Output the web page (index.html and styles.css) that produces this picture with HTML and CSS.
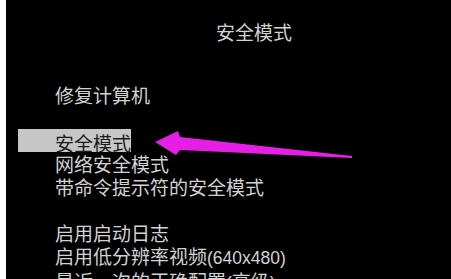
FILE: index.html
```html
<!DOCTYPE html>
<html lang="zh-CN">
<head>
<meta charset="utf-8">
<title>安全模式</title>
<link rel="stylesheet" href="styles.css">
</head>
<body>
<div class="screen">
  <div class="title">安全模式</div>
  <div class="repair">修复计算机</div>
  <ul class="menu">
    <li class="row selected"><span class="bar">安全模式</span></li>
    <li class="row">网络安全模式</li>
    <li class="row">带命令提示符的安全模式</li>
    <li class="row gap"></li>
    <li class="row">启用启动日志</li>
    <li class="row">启用低分辨率视频<span class="latin">(640x480)</span></li>
    <li class="row last">最近一次的正确配置<span class="latin">(</span>高级<span class="latin">)</span></li>
  </ul>
  <svg class="arrow" viewBox="0 0 451 279" width="451" height="279" aria-hidden="true">
    <polygon points="155,142 178,131 180,137 352,156 352,158 180,150 176,155" fill="#e61fe6"/>
  </svg>
</div>
</body>
</html>
```

FILE: styles.css
```css
html, body {
  margin: 0;
  padding: 0;
  background: #000;
  overflow: hidden;
}

.screen {
  position: relative;
  box-sizing: border-box;
  width: 451px;
  height: 279px;
  overflow: hidden;
  background: #000;
  border-left: 6px solid #ffffff;
  padding-top: 20px;
  color: #d2d2d2;
  font-family: "Noto Sans CJK SC", "Liberation Sans", sans-serif;
  font-size: 19px;
  line-height: 23px;
}

.title {
  padding-left: 210px;
  height: 23px;
}

.repair {
  margin-top: 40px;
  padding-left: 49px;
  height: 23px;
}

.menu {
  list-style: none;
  margin: 25px 0 0 0;
  padding: 0;
}

.row {
  height: 23px;
  padding-left: 49px;
  white-space: nowrap;
}

.row.selected {
  padding-left: 0;
}

.row.last {
  margin-top: 2px;
}

.bar {
  display: block;
  box-sizing: content-box;
  margin-top: -2px;
  margin-left: 12px;
  padding-top: 2px;
  padding-left: 37px;
  width: 76px;
  height: 21px;
  background: #c6c6c6;
  color: #1c1c1c;
}

.latin {
  font-family: "Liberation Sans", sans-serif;
  font-size: 17.5px;
}

.arrow {
  position: absolute;
  left: -6px;
  top: 0;
}
```
